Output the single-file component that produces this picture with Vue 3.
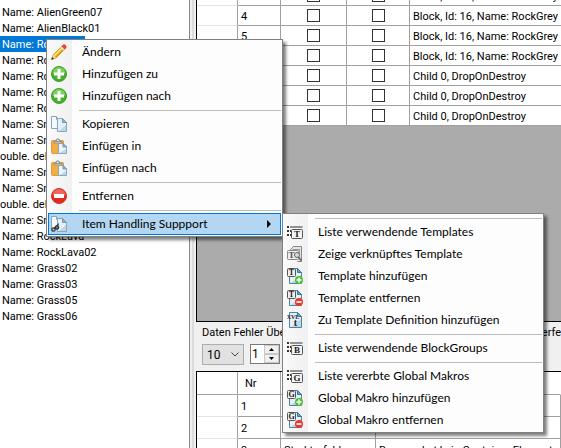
<script setup>
import { ref } from 'vue'

const names = [
  'Name: AlienGreen07', 'Name: AlienBlack01', 'Name: RockGrey01', 'Name: RockGrey02',
  'Name: RockGrey03', 'Name: RockGrey04', 'Name: RockGrey05', 'Name: Snow01',
  'Name: Snow02', 'ouble. deleted', 'Name: Snow03', 'Name: Snow04', 'ouble. deleted',
  'Name: Snow05', 'Name: RockLava', 'Name: RockLava02', 'Name: Grass02',
  'Name: Grass03', 'Name: Grass05', 'Name: Grass06',
]
const selected = ref(2)

const block = 'Block, Id: 16, Name: RockGrey'
const child = 'Child 0, DropOnDestroy'
const blocks = [
  { nr: '3', text: block }, { nr: '4', text: block }, { nr: '5', text: block },
  { nr: '6', text: block }, { nr: '7', text: child }, { nr: '8', text: child },
  { nr: '9', text: child },
]
const errors = [
  { nr: '1', kind: '', text: '' },
  { nr: '2', kind: '', text: '' },
  { nr: '3', kind: 'Strukturfehler', text: 'Bonuspaket kein Container Element' },
]

const menu = [
  { text: 'Ändern', icon: 'pencil' },
  { text: 'Hinzufügen zu', icon: 'plus' },
  { text: 'Hinzufügen nach', icon: 'plus' },
  null,
  { text: 'Kopieren', icon: 'copy' },
  { text: 'Einfügen in', icon: 'paste' },
  { text: 'Einfügen nach', icon: 'paste' },
  null,
  { text: 'Entfernen', icon: 'minus' },
  null,
  { text: 'Item Handling Suppport', icon: 'link', open: true },
]
const submenu = [
  null,
  { text: 'Liste verwendende Templates', icon: 'list', letter: 'T' },
  { text: 'Zeige verknüpftes Template', icon: 'find', letter: 'T' },
  { text: 'Template hinzufügen', icon: 'pageadd', letter: 'T' },
  { text: 'Template entfernen', icon: 'pagedel', letter: 'T' },
  { text: 'Zu Template Definition hinzufügen', icon: 'def' },
  null,
  { text: 'Liste verwendende BlockGroups', icon: 'list', letter: 'B' },
  null,
  { text: 'Liste vererbte Global Makros', icon: 'list', letter: 'G' },
  { text: 'Global Makro hinzufügen', icon: 'pageadd', letter: 'G' },
  { text: 'Global Makro entfernen', icon: 'pagedel', letter: 'G' },
]
const menus = [
  { cls: 'main', label: 'Kontextmenü', items: menu },
  { cls: 'sub', label: 'Item Handling Suppport', items: submenu },
]
</script>

<template>
  <main class="window">
    <ul class="names">
      <li v-for="(n, i) in names" :key="i">
        <span :class="{ selected: i === selected, cut: n.startsWith('ouble') }" @click="selected = i">{{ n }}</span>
      </li>
    </ul>

    <div class="side">
      <section class="top">
        <table class="grid blocks">
          <colgroup><col class="c-head"><col class="c-nr"><col class="c-a"><col class="c-b"><col></colgroup>
          <tbody>
            <tr v-for="b in blocks" :key="b.nr">
              <th></th>
              <td>{{ b.nr }}</td>
              <td class="check"><input type="checkbox" :aria-label="'A ' + b.nr"></td>
              <td class="check"><input type="checkbox" :aria-label="'B ' + b.nr"></td>
              <td>{{ b.text }}</td>
            </tr>
          </tbody>
        </table>
      </section>

      <section class="errors">
        <h2><span>Daten Fehler Übersicht</span><span class="tail">erfe</span></h2>
        <div class="tools">
          <select aria-label="Anzahl"><option>10</option><option>20</option></select>
          <div class="spin">
            <input type="text" value="1" aria-label="Seite">
            <div class="arrows">
              <button aria-label="Mehr"><svg viewBox="0 0 5 3"><path d="M0 3 2.500 0 5 3z" /></svg></button>
              <button aria-label="Weniger"><svg viewBox="0 0 5 3"><path d="M0 0 2.500 3 5 0z" /></svg></button>
            </div>
          </div>
        </div>
        <div class="frame">
          <table class="grid faults">
            <colgroup><col class="c-head"><col class="c-nr"><col class="c-kind"><col></colgroup>
            <thead><tr><th></th><th>Nr</th><th></th><th></th></tr></thead>
            <tbody>
              <tr v-for="e in errors" :key="e.nr">
                <th></th><td>{{ e.nr }}</td><td>{{ e.kind }}</td><td>{{ e.text }}</td>
              </tr>
            </tbody>
          </table>
        </div>
      </section>
    </div>

    <div v-for="m in menus" :key="m.cls" class="menu" :class="m.cls" role="menu" :aria-label="m.label">
      <template v-for="(it, i) in m.items" :key="i">
        <div v-if="!it" class="sep" role="separator"></div>
        <button v-else role="menuitem" :class="{ open: it.open }">
          <svg class="icon" viewBox="0 0 16 16" aria-hidden="true">
            <g v-if="it.icon === 'pencil'">
              <path d="M.5 15.500 2 11 11.500 1.500q1.500-1.500 3 0t0 3L5 14z" fill="#f5b81c" stroke="#c07a1c" stroke-width=".6" />
              <path d="M3 12 12 3" stroke="#ffe678" stroke-width="1.500" />
              <path d="M4.500 13.500 13.500 4.500" stroke="#e08a10" stroke-width="1" />
              <path d="M10.500 2.500 12 1q1.500-1 2.700.2t.3 2.800L13.500 5.500z" fill="#e8432e" />
              <path d="M9.500 3.500 10.500 2.500 13.500 5.500 12.500 6.500z" fill="#dfe3e8" />
              <path d="M.5 15.500 2 11l3 3z" fill="#f3d8ae" />
              <path d="M.3 15.700 1.200 13l1.800 1.800z" fill="#33261a" />
            </g>
            <g v-else-if="it.icon === 'plus'">
              <circle cx="8" cy="8" r="7.500" fill="#43b02a" stroke="#3f9c2c" />
              <path d="M1.500 7.500a6.500 6.500 0 0 1 13 0q-6.500 2.500-13 0z" fill="#8fdc70" opacity=".75" />
              <path d="M6.500 3h3v3.500h3.500v3h-3.500v3.500h-3v-3.500h-3.500v-3h3.500z" fill="#fff" />
            </g>
            <g v-else-if="it.icon === 'minus'">
              <circle cx="8" cy="8" r="7.500" fill="#e2281f" stroke="#d2382f" />
              <path d="M1.500 7.500a6.500 6.500 0 0 1 13 0z" fill="#f4786a" opacity=".8" />
              <rect x="3" y="6" width="10" height="4" rx=".5" fill="#fff" />
            </g>
            <g v-else-if="it.icon === 'copy' || it.icon === 'link'">
              <path d="M.5.5h5l3 3v9h-8z" fill="#f3f8fc" stroke="#8ba6b8" />
              <path d="M5.500.5v3h3" fill="#cfe2ee" stroke="#8ba6b8" />
              <path d="M6.500 2.500h5l4 4v9h-9z" fill="#e4f1f9" stroke="#8ba6b8" />
              <path d="M11.500 2.500v4h4z" fill="#8fb8d0" stroke="#7896aa" />
              <path d="M8 15l7-6v6z" fill="#b9d8ea" />
              <g v-if="it.icon === 'link'" fill="none" stroke="#333" stroke-width="1.200">
                <circle cx="2.500" cy="13.500" r="1.700" /><circle cx="6" cy="11.500" r="1.700" />
                <path d="M3 12 8 7.500M5 13 7.500 8" stroke-width=".9" />
              </g>
            </g>
            <g v-else-if="it.icon === 'paste'">
              <rect x=".5" y="2.500" width="12" height="13" rx="1" fill="#f3ad45" stroke="#e09a35" />
              <path d="M3 3.500h8v1.500H3z" fill="#ddd" stroke="#888" stroke-width=".8" />
              <path d="M5 3a1.700 2 0 0 1 3.600 0" fill="#eee" stroke="#777" />
              <path d="M7.500 5.500h4.500l3.500 3.500v6.500h-8z" fill="#eaf4fb" stroke="#8ba6b8" />
              <path d="M12 5.500v3.500h3.500z" fill="#8fb8d0" stroke="#7896aa" />
              <path d="M8.500 15l6.500-4v4z" fill="#b9d8ea" />
            </g>
            <g v-else-if="it.icon === 'list'">
              <path d="M0 2h2v2H0zM0 6h2v2H0zM0 10h2v2H0zM3 2.500h12.500v1H3zM3 6h1v2H3zM3 10h1v2H3z" fill="#333" />
              <rect x="4.500" y="5.500" width="11" height="9" rx="1" fill="#f4f4f4" stroke="#555" />
              <text x="10" y="13" class="glyph g9">{{ it.letter }}</text>
            </g>
            <g v-else-if="it.icon === 'find'">
              <path d="M3.500 4.500v-1l3-3h8v15h-4" fill="#e4e4e4" stroke="#888" />
              <path d="M5.500 3.500h7M12.500 3.500v5" stroke="#999" fill="none" />
              <rect x=".5" y="4.500" width="11" height="9" rx="1" fill="#eee" stroke="#888" />
              <text x="4.500" y="12" class="glyph g9 soft">{{ it.letter }}</text>
              <circle cx="10" cy="9" r="2.500" fill="#ddd" stroke="#666" />
              <path d="M11.500 11l3 4" stroke="#666" stroke-width="1.500" />
            </g>
            <g v-else>
              <path d="M2.500.5h8l4 4v11h-12z" fill="#e3f0f8" stroke="#54809c" />
              <path d="M10.500.5v4h4z" fill="#6ba3c4" stroke="#3f7494" />
              <path d="M4 15l10-8v8z" fill="#b9d8ea" />
              <g v-if="it.icon === 'def'">
                <text x="6" y="6.500" class="glyph g6">XVL</text>
                <text x="8.500" y="14" class="glyph g10">t</text>
              </g>
              <g v-else>
                <rect x=".5" y=".5" width="8" height="8" rx="1" fill="#f0f0f0" stroke="#555" />
                <text x="4.500" y="7" class="glyph g8">{{ it.letter }}</text>
                <circle cx="12" cy="12" r="4" :fill="it.icon === 'pageadd' ? '#4fbf32' : '#e53a2e'" />
                <path d="M9.500 11.200h5v1.600h-5z" fill="#fff" />
                <path v-if="it.icon === 'pageadd'" d="M11.200 9.500h1.600v5h-1.600z" fill="#fff" />
              </g>
            </g>
          </svg>
          <span class="label">{{ it.text }}</span>
          <svg v-if="it.open" class="arrow" viewBox="0 0 4 8" aria-hidden="true"><path d="M0 0l4 4-4 4z" /></svg>
        </button>
      </template>
    </div>
  </main>
</template>

<style>
body { margin: 0; overflow: hidden; }
</style>

<style scoped>
.window {
  position: relative;
  display: flex;
  height: 100vh;
  overflow: hidden;
  background: #f0f0f0;
  color: #000;
  font: 11px/16px Roboto, Arial, sans-serif;
}
.names {
  flex: 0 0 190px;
  box-sizing: border-box;
  margin: 0;
  padding: 4px 0 0;
  list-style: none;
  background: #fff;
  border-right: 1px solid #828790;
  white-space: nowrap;
  overflow: hidden;
}
.names li { height: 16px; }
.names span {
  display: block;
  box-sizing: border-box;
  height: 16px;
  padding-left: 2px;
  line-height: 18px;
}
.names .cut { padding-left: 0; }
.names .selected { width: 85px; background: #0078d7; color: #fff; }

.side {
  flex: 1;
  min-width: 0;
  display: flex;
  flex-direction: column;
  margin-left: 2px;
  border-left: 2px solid #dcdcdc;
  padding-left: 2px;
}
.top {
  flex: 0 0 322px;
  box-sizing: border-box;
  overflow: hidden;
  background: #ababab;
  border-left: 1px solid #000;
  border-bottom: 1px solid #000;
}
.grid {
  width: 100%;
  table-layout: fixed;
  border-collapse: separate;
  border-spacing: 0;
  background: #fff;
}
.grid td, .grid th {
  box-sizing: border-box;
  padding: 2px 0 0 3px;
  border-right: 1px solid #a0a0a0;
  border-bottom: 1px solid #a0a0a0;
  font-weight: normal;
  text-align: left;
  white-space: nowrap;
  line-height: 14px;
}
.grid tbody th { border-bottom-color: #e3e3e3; }
.c-head { width: 41px; }
.c-nr { width: 43px; }
.c-a { width: 66px; }
.c-b { width: 63px; }
.c-kind { width: 95px; }
.blocks { margin-top: -14px; }
.blocks td, .blocks th { height: 20px; }
.blocks td:last-child { border-right: 0; }
.blocks .check { padding: 0; }
.blocks input {
  appearance: none;
  display: block;
  box-sizing: border-box;
  width: 13px;
  height: 13px;
  margin: 0 auto;
  border: 1px solid #333;
  background: #fff;
}

.errors {
  flex: 1;
  min-height: 0;
  display: flex;
  flex-direction: column;
}
.errors h2 {
  display: flex;
  justify-content: space-between;
  margin: 3px 0;
  padding-left: 6px;
  font: inherit;
}
.tools { display: flex; gap: 6px; padding-left: 6px; }
.tools select {
  appearance: none;
  box-sizing: border-box;
  width: 42px;
  height: 21px;
  padding: 0 4px;
  border: 1px solid #adadad;
  border-radius: 0;
  background: #e1e1e1 url("data:image/svg+xml,%3Csvg xmlns='http://www.w3.org/2000/svg' width='8' height='5'%3E%3Cpath d='M.5.5 4 4 7.500.5' fill='none' stroke='%23444'/%3E%3C/svg%3E") no-repeat right 4px center;
  font: 12px Roboto, Arial, sans-serif;
}
.spin {
  display: flex;
  box-sizing: border-box;
  width: 30px;
  height: 20px;
  border: 1px solid #7a7a7a;
  background: #fff;
}
.spin input {
  flex: 1;
  min-width: 0;
  padding: 0 0 1px 1px;
  border: 0;
  background: none;
  font: 12px Roboto, Arial, sans-serif;
}
.arrows { display: flex; flex-direction: column; width: 15px; }
.arrows button {
  flex: 1;
  display: grid;
  place-items: center;
  min-height: 0;
  padding: 0;
  border: 1px solid #c8c8c8;
  background: #f0f0f0;
}
.arrows svg { width: 5px; height: 3px; }
.frame {
  flex: 1;
  min-height: 0;
  margin-top: 6px;
  overflow: hidden;
  border-top: 1px solid #000;
  border-left: 1px solid #000;
  background: #fff;
}
.faults td, .faults th { height: 22px; }
.faults thead th { height: 23px; padding-left: 7px; }
.faults thead th:last-child { border-right-color: #fff; }

.menu {
  position: absolute;
  box-sizing: border-box;
  padding: 1px;
  border: 1px solid #808080;
  background: linear-gradient(to right, #fafafa, #f0f0f0 25px, #fdfdfd 25px);
  box-shadow: 3px 3px 3px rgba(0, 0, 0, .5);
}
.main { left: 46px; top: 39px; width: 237px; }
.sub { left: 282px; top: 213px; width: 262px; }
.menu button {
  display: flex;
  align-items: center;
  box-sizing: border-box;
  width: 100%;
  height: 22px;
  padding: 0 10px 0 3px;
  border: 0;
  background: none;
  color: #000;
  font: 12px/16px Lato, "Noto Sans", sans-serif;
  text-align: left;
  white-space: nowrap;
}
.menu button.open {
  background: #b3d7f3;
  outline: 1px solid #0078d7;
  outline-offset: -1px;
}
.icon { flex: none; width: 16px; height: 16px; margin-right: 15px; }
.label { flex: 1; }
.arrow { width: 4px; height: 8px; }
.sep { height: 6px; display: flex; align-items: center; padding-left: 31px; }
.sep::after { content: ""; flex: 1; height: 1px; background: #bdbdbd; }
.glyph { font-family: "Liberation Serif", serif; font-weight: bold; text-anchor: middle; fill: #222; }
.soft { fill: #555; }
.g6 { font-size: 6px; }
.g8 { font-size: 8px; }
.g9 { font-size: 9px; }
.g10 { font-size: 10px; }
</style>
